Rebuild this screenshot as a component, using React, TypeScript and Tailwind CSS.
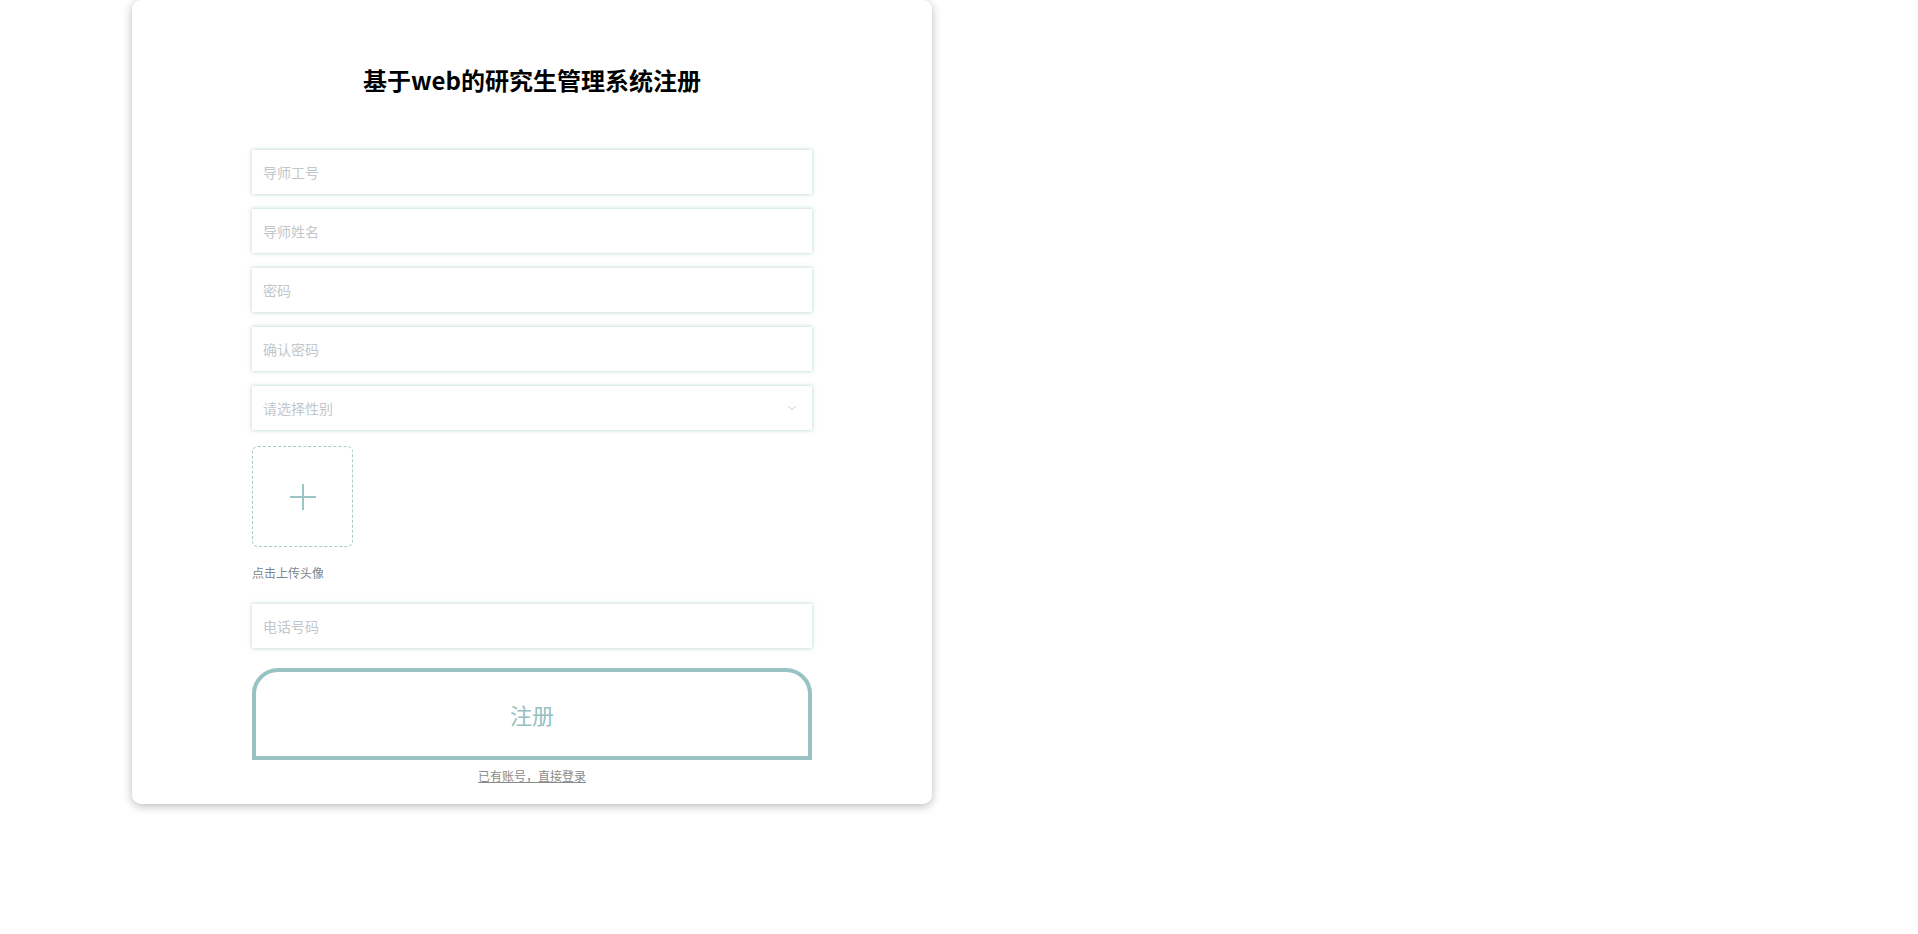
import { ChevronDown } from 'lucide-react';

const fields = ['导师工号', '导师姓名', '密码', '确认密码'];

function Field({ placeholder }: { placeholder: string }) {
  return (
    <div className="flex h-[44px] w-full items-center bg-white px-[11px] shadow-[0_0_4px_rgba(95,158,160,0.5)]">
      <input
        className="w-full bg-transparent text-[14px] text-gray-700 outline-none placeholder:text-[#c3c7cc]"
        placeholder={placeholder}
      />
    </div>
  );
}

export default function App() {
  return (
    <div
      className="min-h-[934px] w-full bg-white"
      style={{ fontFamily: '"Noto Sans CJK SC", "Noto Sans", sans-serif' }}
    >
      <div className="ml-[132px] flex h-[804px] w-[800px] flex-col items-center rounded-[9px] bg-white shadow-[0_2px_10px_rgba(0,0,0,0.28)]">
        <h1 className="mt-[64px] text-[24px] leading-[32px] font-bold text-black">
          基于web的研究生管理系统注册
        </h1>

        <form className="mt-[54px] flex w-[560px] flex-col">
          <div className="flex flex-col gap-[15px]">
            {fields.map((f) => (
              <Field key={f} placeholder={f} />
            ))}
            <div className="flex h-[44px] w-full items-center justify-between bg-white px-[11px] shadow-[0_0_4px_rgba(95,158,160,0.5)]">
              <span className="text-[14px] text-[#c3c7cc]">请选择性别</span>
              <ChevronDown className="mr-[2px] h-[14px] w-[14px] text-[#b9bfc6]" strokeWidth={1.5} />
            </div>
          </div>

          <div className="mt-[16px] flex h-[101px] w-[101px] items-center justify-center rounded-[6px] border border-dashed border-[#a9c9c9]">
            <svg width="28" height="28" viewBox="0 0 28 28">
              <path d="M14 1v26M1 14h26" stroke="#9cc4c4" strokeWidth="2" />
            </svg>
          </div>
          <p className="mt-[18px] text-[12px] leading-[16px] text-[#7b868c]">点击上传头像</p>

          <div className="mt-[23px]">
            <Field placeholder="电话号码" />
          </div>

          <button
            type="button"
            className="mt-[20px] flex h-[92px] w-full items-center justify-center rounded-t-[26px] border-4 border-[#98c3c2] bg-white text-[22px] text-[#95c0c0]"
          >
            注册
          </button>

          <a className="mt-[8px] self-center text-[12px] leading-[16px] text-[#8a8a8a] underline">
            已有账号，直接登录
          </a>
        </form>
      </div>
    </div>
  );
}
